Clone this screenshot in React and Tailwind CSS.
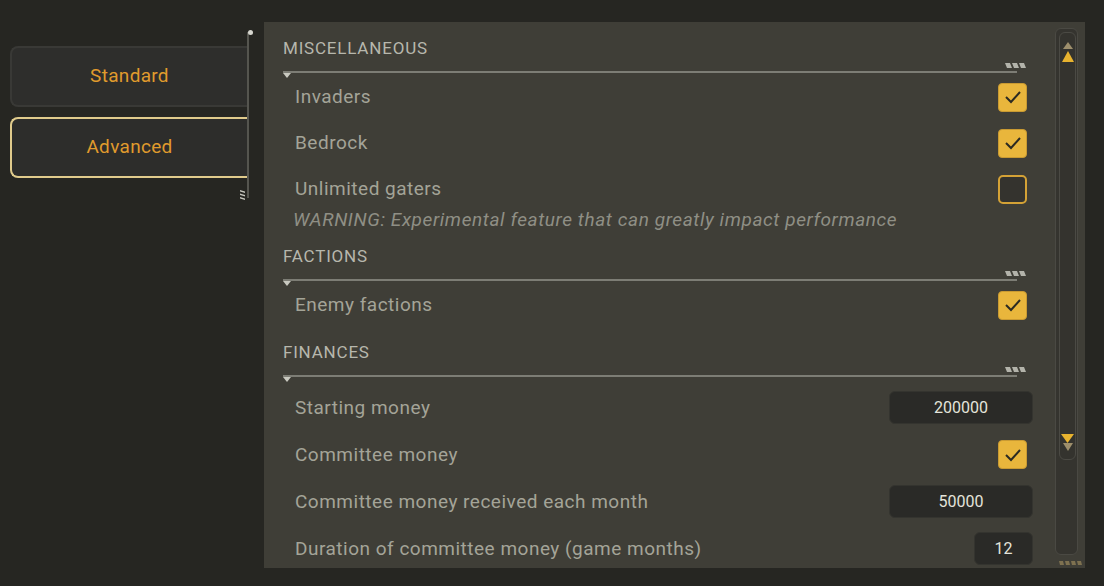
import React from 'react';

const Hatch = ({ className = '', color = '#b3b3aa' }) => (
  <svg width="22" height="5" viewBox="0 0 22 5" className={className}>
    <path d="M0 0 H5 L7 5 H2 Z M7 0 H12 L14 5 H9 Z M14 0 H19 L21 5 H16 Z" fill={color} />
  </svg>
);

const SectionHeader = ({ title, first }) => (
  <div className={first ? '' : 'mt-[11px]'}>
    <div className="h-[26px] pt-[1px] flex items-center text-[17px] tracking-[0.8px] text-[#b7b7ad] uppercase">
      {title}
    </div>
    <div className="relative h-[13px] mr-[6px]">
      <Hatch className="absolute right-0 top-[2px]" />
      <div className="absolute left-0 right-[10px] top-[10px] h-[2px] bg-[#7d7d75]" />
      <svg width="8" height="5" viewBox="0 0 8 5" className="absolute left-0 top-[12px]">
        <path d="M0 0 H8 L4 5 Z" fill="#c9c9c0" />
      </svg>
    </div>
  </div>
);

const Checkbox = ({ checked }) =>
  checked ? (
    <div className="w-[29px] h-[29px] mr-[6px] rounded-[4px] bg-[#e9b63c] border border-[#c99a32] flex items-center justify-center">
      <svg width="18" height="14" viewBox="0 0 18 14">
        <path d="M2 7 L7 12 L16 2" fill="none" stroke="#2c2a22" strokeWidth="2" />
      </svg>
    </div>
  ) : (
    <div className="w-[29px] h-[29px] mr-[6px] rounded-[5px] bg-[#34332e] border-2 border-[#d4a236]" />
  );

const Input = ({ value, small }) => (
  <div
    className={`${small ? 'w-[59px]' : 'w-[144px]'} h-[33px] rounded-md bg-[#2a2a27] border border-[#34342f] flex items-center justify-center text-[16px] text-[#e4e4db]`}
  >
    {value}
  </div>
);

const Row = ({ label, children, tall }) => (
  <div className={`${tall ? 'h-[47px]' : 'h-[46px]'} flex items-center justify-between pl-[12px]`}>
    <span className="pt-[1px] text-[19px] tracking-[0.5px] text-[#a4a498]">{label}</span>
    {children}
  </div>
);

export default function App() {
  return (
    <div
      className="w-[1104px] h-[586px] bg-[#262622] flex overflow-hidden"
      style={{ fontFamily: 'Roboto, "Liberation Sans", sans-serif' }}
    >
      {/* left tabs */}
      <div className="w-[264px] shrink-0 flex pl-[10px] pt-[32px]">
        <div className="w-[237px] pt-[14px] flex flex-col gap-[10px]">
          <div className="h-[61px] rounded-l-lg bg-[#2e2e2c] border-2 border-r-0 border-[#393936] flex items-center justify-center text-[19px] text-[#e09b2d] tracking-[0.3px]">
            Standard
          </div>
          <div className="h-[61px] rounded-l-lg bg-[#2d2d2b] border-2 border-r-0 border-[#e0cb8c] flex items-center justify-center text-[19px] text-[#e09b2d] tracking-[0.3px]">
            Advanced
          </div>
        </div>
        <div className="relative w-[2px] h-[166px] bg-[#55554f]">
          <div className="absolute left-[1px] top-[-2px] w-[5px] h-[5px] rounded-full bg-[#d6d6cf]" />
          <svg width="5" height="10" viewBox="0 0 5 10" className="absolute left-[-7px] top-[158px]">
            <path d="M0 0 L5 1.5 V3 L0 1.5 Z M0 3.5 L5 5 V6.5 L0 5 Z M0 7 L5 8.5 V10 L0 8.5 Z" fill="#c4c4bc" />
          </svg>
        </div>
      </div>

      {/* main panel */}
      <div className="mt-[22px] w-[821px] h-[546px] bg-[#3f3e37] flex overflow-hidden relative">
        <div className="flex-1 pl-[19px] pr-[22px] pt-[13px]">
          <SectionHeader title="Miscellaneous" first />
          <Row label="Invaders">
            <Checkbox checked />
          </Row>
          <Row label="Bedrock">
            <Checkbox checked />
          </Row>
          <div>
            <Row label="Unlimited gaters">
              <Checkbox />
            </Row>
            <p className="mt-[-4px] h-[24px] leading-[24px] pl-[10px] italic text-[19px] tracking-[0.6px] text-[#8f8f85]">
              WARNING: Experimental feature that can greatly impact performance
            </p>
          </div>

          <SectionHeader title="Factions" />
          <Row label="Enemy factions">
            <Checkbox checked />
          </Row>

          <SectionHeader title="Finances" />
          <div className="pt-[6px]">
            <Row label="Starting money" tall>
              <Input value="200000" />
            </Row>
            <Row label="Committee money" tall>
              <Checkbox checked />
            </Row>
            <Row label="Committee money received each month" tall>
              <Input value="50000" />
            </Row>
            <Row label="Duration of committee money (game months)" tall>
              <Input value="12" small />
            </Row>
          </div>
        </div>

        {/* scrollbar */}
        <div className="w-[23px] mt-[6px] mb-[13px] mr-[7px] rounded-md bg-[#35342f] border border-[#4a4943] p-[3px] pr-[1px]">
          <div className="h-[428px] rounded-md border border-[#4b4a44] bg-[#34332e] flex flex-col items-center justify-between pt-[9px] pb-[8px]">
            <div className="flex flex-col items-center gap-[2px]">
              <svg width="10" height="7" viewBox="0 0 10 7">
                <path d="M5 0 L10 7 H0 Z" fill="#9e8f6c" />
              </svg>
              <svg width="12" height="11" viewBox="0 0 12 11">
                <path d="M6 0 L12 11 H0 Z" fill="#e8b32f" />
              </svg>
            </div>
            <div className="flex flex-col items-center">
              <svg width="13" height="9" viewBox="0 0 13 9">
                <path d="M0 0 H13 L6.5 9 Z" fill="#e8b32f" />
              </svg>
              <svg width="10" height="8" viewBox="0 0 10 8">
                <path d="M0 0 H10 L5 8 Z" fill="#9e8f6c" />
              </svg>
            </div>
          </div>
        </div>
        <svg width="24" height="4" viewBox="0 0 24 4" className="absolute right-[2px] bottom-[3px]">
          <path d="M0 0 H4 L5 4 H1 Z M6 0 H10 L11 4 H7 Z M12 0 H16 L17 4 H13 Z M18 0 H22 L23 4 H19 Z" fill="#7e7150" />
        </svg>
      </div>
    </div>
  );
}
